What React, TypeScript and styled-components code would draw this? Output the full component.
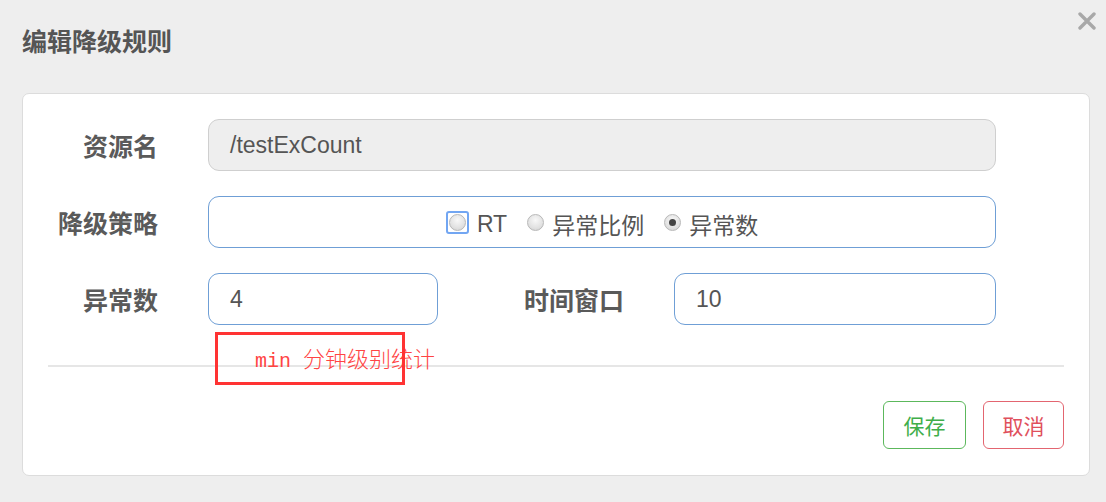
import React from "react";
import styled, { createGlobalStyle } from "styled-components";

const GlobalStyle = createGlobalStyle`
  html, body {
    margin: 0;
    padding: 0;
    background: #eeeeee;
  }
  body {
    font-family: "Liberation Sans", "Noto Sans CJK SC", sans-serif;
    color: #555;
  }
`;

const sans = `"Liberation Sans", "Noto Sans CJK SC", sans-serif`;

const Modal = styled.div`
  position: relative;
  width: 1106px;
  height: 502px;
  box-sizing: border-box;
  padding: 22px 16px 0 22px;
`;

const Title = styled.h4`
  margin: 0;
  font-family: ${sans};
  font-size: 25px;
  line-height: 40px;
  font-weight: 700;
  color: #555;
`;

const Close = styled.button`
  position: absolute;
  top: 11px;
  right: 9px;
  width: 20px;
  height: 20px;
  padding: 0;
  border: none;
  background: none;
  display: flex;
  align-items: center;
  justify-content: center;
`;

const Card = styled.div`
  position: relative;
  margin-top: 31px;
  background: #fff;
  border: 1px solid #dcdcdc;
  border-radius: 7px;
  padding: 25px 25px 25px 25px;
  height: 383px;
  box-sizing: border-box;
`;

const Form = styled.div`
  display: flex;
  flex-direction: column;
  gap: 25px;
`;

const Row = styled.div`
  display: flex;
  align-items: center;
`;

const Label = styled.label<{ $width: number }>`
  width: ${(p) => p.$width}px;
  text-align: right;
  font-family: ${sans};
  font-size: 25px;
  font-weight: 700;
  color: #5a5a5a;
  margin-right: 50px;
  flex-shrink: 0;
`;

const Field = styled.div<{ $width: number; $disabled?: boolean }>`
  width: ${(p) => p.$width}px;
  height: 52px;
  box-sizing: border-box;
  border: 1px solid ${(p) => (p.$disabled ? "#cfcfcf" : "#6f9fd6")};
  background: ${(p) => (p.$disabled ? "#eeeeee" : "#fff")};
  border-radius: 11px;
  padding: 0 21px;
  display: flex;
  align-items: center;
  font-family: ${sans};
  font-size: 23px;
  color: #555;
  flex-shrink: 0;
`;

const RadioBox = styled(Field)`
  justify-content: center;
  gap: 20px;
  padding-top: 4px;
`;

const RadioItem = styled.span`
  display: inline-flex;
  align-items: center;
  gap: 8px;
  font-family: ${sans};
  font-size: 23px;
  color: #555;
`;

const Dot = styled.span<{ $checked?: boolean; $focus?: boolean }>`
  position: relative;
  width: 17px;
  height: 17px;
  border-radius: 50%;
  border: 1px solid #b8b8b8;
  background: radial-gradient(circle at 50% 35%, #f8f8f8 0%, #e0e0e0 65%, #cdcdcd 100%);
  box-sizing: border-box;
  margin-top: -4px;
  box-shadow: ${(p) => (p.$focus ? "0 0 0 1px #fff, 0 0 0 3px #72a6f2" : "none")};
  &::after {
    content: "";
    display: ${(p) => (p.$checked ? "block" : "none")};
    position: absolute;
    left: 50%;
    top: 50%;
    width: 7px;
    height: 7px;
    margin: -3.5px 0 0 -3.5px;
    border-radius: 50%;
    background: #444;
  }
`;

const FocusRing = styled.span`
  display: inline-flex;
  padding: 1px;
  border: 2px solid #72a6f2;
  border-radius: 3px;
  margin-top: -4px;
  & > span {
    margin-top: 0;
    box-shadow: none;
  }
`;

const Help = styled.div`
  height: 20px;
  margin-top: 20px;
  padding-left: 207px;
  line-height: 24px;
  color: #f44;
  white-space: nowrap;
  font-family: "Liberation Mono", "Noto Sans CJK SC", monospace;
  font-size: 20px;
`;

const HelpCjk = styled.span`
  font-size: 22px;
  font-family: "Noto Sans CJK SC", serif;
  font-weight: 300;
`;

const Marker = styled.div`
  position: absolute;
  left: 192px;
  top: 238px;
  width: 190px;
  height: 53px;
  box-sizing: border-box;
  border: 3px solid #f33;
`;

const Divider = styled.hr`
  margin: 0;
  border: none;
  border-top: 2px solid #e6e6e6;
`;

const Footer = styled.div`
  display: flex;
  justify-content: flex-end;
  gap: 17px;
  margin-top: 34px;
`;

const Button = styled.button<{ $tone: "green" | "red" }>`
  height: 48px;
  width: ${(p) => (p.$tone === "green" ? 83 : 81)}px;
  padding: 0;
  background: #fff;
  border-radius: 6px;
  font-family: ${sans};
  font-size: 21px;
  border: 1px solid ${(p) => (p.$tone === "green" ? "#5cb85c" : "#e36570")};
  color: ${(p) => (p.$tone === "green" ? "#3fae4a" : "#e0505c")};
`;

export default function App() {
  return (
    <>
      <GlobalStyle />
      <Modal>
        <Title>编辑降级规则</Title>
        <Close aria-label="close">
          <svg width="18" height="18" viewBox="0 0 18 18">
            <path d="M2 2 L16 16 M16 2 L2 16" stroke="#a8a8a8" strokeWidth="3.4" strokeLinecap="round" />
          </svg>
        </Close>
        <Card>
          <Form>
            <Row>
              <Label $width={110}>资源名</Label>
              <Field $width={788} $disabled>/testExCount</Field>
            </Row>
            <Row>
              <Label $width={110}>降级策略</Label>
              <RadioBox $width={788}>
                <RadioItem>
                  <FocusRing>
                    <Dot />
                  </FocusRing>
                  RT
                </RadioItem>
                <RadioItem>
                  <Dot />
                  异常比例
                </RadioItem>
                <RadioItem>
                  <Dot $checked />
                  异常数
                </RadioItem>
              </RadioBox>
            </Row>
            <Row>
              <Label $width={110}>异常数</Label>
              <Field $width={230}>4</Field>
              <Label $width={186}>时间窗口</Label>
              <Field $width={322}>10</Field>
            </Row>
          </Form>
          <Help>
            min <HelpCjk>分钟级别统计</HelpCjk>
          </Help>
          <Divider />
          <Footer>
            <Button $tone="green">保存</Button>
            <Button $tone="red">取消</Button>
          </Footer>
          <Marker />
        </Card>
      </Modal>
    </>
  );
}
